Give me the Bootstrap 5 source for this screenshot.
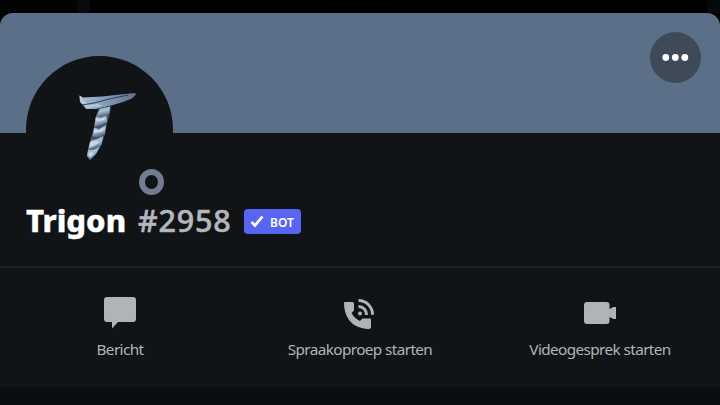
<!DOCTYPE html>
<html lang="nl">
<head>
<meta charset="utf-8">
<meta name="viewport" content="width=device-width, initial-scale=1">
<title>Trigon</title>
<link href="https://cdn.jsdelivr.net/npm/bootstrap@5.3.0/dist/css/bootstrap.min.css" rel="stylesheet">
<style>
body{background:#000;width:720px;height:405px;overflow:hidden;font-family:"Noto Sans",sans-serif}
.backdrop-strip{height:13px;background:linear-gradient(90deg,#030304 77px,#090a0c 77px 90px,#000 90px 707px,#04090c 707px)}
.tab-outline{width:76px;height:5px;border:1px solid #080808;border-top:0}
.profile{height:374px;background:#111416;border-radius:13px 13px 0 0}
.banner{height:120px;background:#5c6f88}
.avatar{width:147px;height:147px;left:26px;top:43px;background:#111416}
.avatar svg{position:absolute;left:44px;top:24px}
.presence{width:25px;height:26px;left:113px;top:113px;border:6.5px solid #737c8e;background:#111416}
.more{width:51px;height:51px;margin:19px 19px 0 0;background:#3f4a59}
.identity{height:135px;padding:68px 0 0 26px;border-bottom:2px solid #1c2023}
.user-name{font-size:31px;line-height:38px;font-weight:800;color:#fff;width:112px;-webkit-text-stroke:.4px #fff}
.user-tag{font-size:30.5px;line-height:39px;font-weight:500;color:#b3b7bb;width:106px;letter-spacing:.8px;-webkit-text-stroke:.55px #b3b7bb}
.bot-tag{width:57px;height:25px;margin-top:8px;background:#5865f2;border-radius:4px;font-size:12px;font-weight:600;color:#fff}
.bot-tag span{padding-top:2px}
.actions{padding-top:25px}
.action{color:#b0b4b8;font-size:15.3px;line-height:24px;letter-spacing:-.6px}
.action svg{width:40px;height:40px;margin-bottom:4px}
.sheet-end{height:18px;background:#0a0e10}
</style>
<script src="https://cdn.jsdelivr.net/npm/bootstrap@5.3.0/dist/js/bootstrap.bundle.min.js"></script>
</head>
<body>
<div class="backdrop-strip d-flex justify-content-center"><div class="tab-outline rounded-bottom"></div></div>
<main class="profile position-relative overflow-hidden">
  <header class="banner d-flex justify-content-end align-items-start">
    <button class="more btn rounded-circle border-0 p-0 d-flex align-items-center justify-content-center" aria-label="Meer">
      <svg width="27" height="7" fill="#fff"><circle cx="3.8" cy="3.5" r="3.4"/><circle cx="13.3" cy="3.5" r="3.4"/><circle cx="22.8" cy="3.5" r="3.4"/></svg>
    </button>
  </header>
  <div class="avatar position-absolute rounded-circle">
    <svg width="75" height="90" viewBox="0 0 75 90">
      <defs>
        <linearGradient id="steel" x1="0" y1="0" x2="1" y2="0"><stop offset="0" stop-color="#a9bfd4"/><stop offset=".5" stop-color="#8299b3"/><stop offset="1" stop-color="#5b7089"/></linearGradient>
        <linearGradient id="fold" x1=".3" y1="0" x2=".6" y2="1"><stop offset="0" stop-color="#8ba3ba"/><stop offset=".45" stop-color="#a9c0d4"/><stop offset="1" stop-color="#40526b"/></linearGradient>
      </defs>
      <path fill="url(#steel)" d="M9.500 15.500 12.500 17.500 32 16.500 50 14.500 65 13 66 14.500 62 18.500 53 22 43 25 26 29 16 29 13 25 10 22Z"/>
      <path fill="#bccfe0" d="M9.500 15.500 12 17 14 21 18 25 27 24 33 26 18 28 13 25 10 21Z" opacity=".75"/>
      <path d="M12 25 24 23 39 19 58 15" fill="none" stroke="#25344d" stroke-width=".9"/>
      <path fill="#40526b" d="M29 28 41 26 39.500 35 36.500 46 34.500 56 31 66 26 74 20 80 17 76 19 64 24 48 26 36Z"/>
      <path fill="url(#fold)" d="M30 28.500 40 26.500 39.500 33 36 37 26 37Z"/>
      <path fill="url(#fold)" d="M26 36.500 31 37.500 36.500 35.500 37 42 30 45.500 24 47Z"/>
      <path fill="url(#fold)" d="M24 47.500 29 49 36 45 35 54 29 57.500 22.500 56.500Z"/>
      <path fill="url(#fold)" d="M21 60.500 27 59 33 56 31.500 65 25 68 18 70Z"/>
      <path fill="url(#fold)" d="M18 70 24 69.500 30 66 26 74 20 80 17 76Z"/>
      <path fill="#d0e2ef" opacity=".8" d="M25 38 30 39 35 37 34 40 27 41ZM24 49 29 50.500 35 47 32 52 24 53ZM20 62 26 61 30 62 24 66 19 68ZM18 74 22 72 24 74 20 78Z"/>
    </svg>
    <div class="presence position-absolute rounded-circle"></div>
  </div>
  <section class="identity d-flex align-items-start">
    <div class="user-name"><span>Trigon</span></div>
    <div class="user-tag"><span>#2958</span></div>
    <div class="bot-tag d-flex align-items-center">
      <svg width="26" height="25"><path d="m7.500 13 3.500 3.500 7.500-9" fill="none" stroke="#fff" stroke-width="2.700"/></svg><span>BOT</span>
    </div>
  </section>
  <nav class="actions row g-0 text-center">
    <div class="action col-4"><svg viewBox="0 0 40 40" fill="currentColor"><path d="M7 4H33Q36 4 36 7V26Q36 29 33 29H18L12 35.500V29H7Q4 29 4 26V7Q4 4 7 4Z"/></svg><div>Bericht</div></div>
    <div class="action col-4"><svg viewBox="0 0 40 40" fill="currentColor"><path d="M5 9H12.500Q14 9 14 10.500V17.500L11.500 20Q14.500 25.500 20 28L22.500 25.500H30Q31 25.500 31 26.500V34Q31 36 29 36H27Q15 35 9 27 4 20 4 10 4 9 5 9Z"/><circle cx="20" cy="20.500" r="2"/><path d="M18.500 13.500A8 8 0 0 1 26.500 22M18.500 7.500A14 14 0 0 1 32.500 21.800" fill="none" stroke="currentColor" stroke-width="3"/></svg><div>Spraakoproep starten</div></div>
    <div class="action col-4"><svg viewBox="0 0 40 40" fill="currentColor"><path d="M7 9H26.500Q29.500 9 29.500 12V16L33.500 14H36V26H33.500L29.500 24V28Q29.500 31 26.500 31H7Q4 31 4 28V12Q4 9 7 9Z"/></svg><div>Videogesprek starten</div></div>
  </nav>
</main>
<div class="sheet-end"></div>
</body>
</html>
